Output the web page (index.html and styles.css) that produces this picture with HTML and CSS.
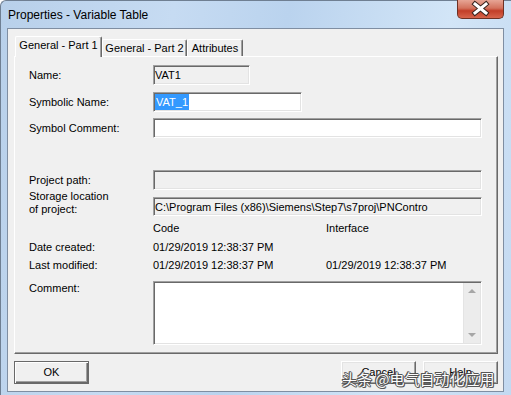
FILE: index.html
```html
<!DOCTYPE html>
<html lang="en">
<head>
  <meta charset="UTF-8">
  <meta name="viewport" content="width=device-width, initial-scale=1.0">
  <title>Properties - Variable Table</title>
  <link rel="stylesheet" href="styles.css">
</head>
<body>
  <div class="window">
    <!-- Title bar -->
    <div class="titlebar">
      <span class="title">Properties - Variable Table</span>
      <div class="close-btn">
        <svg width="47" height="19" viewBox="0 0 47 19">
          <path d="M18 5 L29 14 M29 5 L18 14" stroke="#3b2620" stroke-width="5" stroke-linecap="square"/>
          <path d="M18 5 L29 14 M29 5 L18 14" stroke="#ffffff" stroke-width="3" stroke-linecap="square"/>
        </svg>
      </div>
    </div>

    <div class="client">
      <!-- Tabs -->
      <div class="tabs">
        <div class="tab active">General - Part 1</div>
        <div class="tab tab-wide">General - Part 2</div>
        <div class="tab tab-small">Attributes</div>
      </div>

      <div class="panel">
        <div class="row">
          <label>Name:</label>
          <div class="field readonly name-field">VAT1</div>
        </div>

        <div class="row gap-7">
          <label>Symbolic Name:</label>
          <div class="field symbol-field"><span class="selected">VAT_1</span></div>
        </div>

        <div class="row gap-6">
          <label>Symbol Comment:</label>
          <div class="field wide"></div>
        </div>

        <div class="row gap-32">
          <label>Project path:</label>
          <div class="field readonly wide"></div>
        </div>

        <div class="row storage">
          <label>Storage location<br>of project:</label>
          <div class="field readonly wide">C:\Program Files (x86)\Siemens\Step7\s7proj\PNContro</div>
        </div>

        <div class="row info gap-5">
          <label></label>
          <span class="code-col">Code</span>
          <span>Interface</span>
        </div>

        <div class="row info gap-5">
          <label>Date created:</label>
          <span class="code-col">01/29/2019 12:38:37 PM</span>
          <span></span>
        </div>

        <div class="row info gap-4">
          <label>Last modified:</label>
          <span class="code-col">01/29/2019 12:38:37 PM</span>
          <span>01/29/2019 12:38:37 PM</span>
        </div>

        <div class="row comment gap-9">
          <label>Comment:</label>
          <div class="field wide memo">
            <div class="memo-text"></div>
            <div class="scrollbar">
              <div class="arrow up"></div>
              <div class="track"></div>
              <div class="arrow down"></div>
            </div>
          </div>
        </div>
      </div>

      <!-- Dialog buttons -->
      <div class="buttons">
        <button class="btn default">OK</button>
        <span class="spacer"></span>
        <button class="btn">Cancel</button>
        <button class="btn">Help</button>
      </div>

      <div class="watermark">头条 @电气自动化应用</div>
    </div>
  </div>
</body>
</html>
```

FILE: styles.css
```css
* {
    box-sizing: border-box;
}
body {
    margin: 0;
    font-family: "Liberation Sans", Arial, sans-serif;
    font-size: 11px;
    color: #000;
    background: #fff;
}
.window {
    width: 511px;
    height: 395px;
    display: flex;
    flex-direction: column;
    border-left: 1px solid #6f7f92;
    border-top: 1px solid #6f7f92;
    border-radius: 6px 0 0 0;
    background: linear-gradient(100deg, #b8d0ea 0%, #c6dbf2 30%, #bad3ee 50%, #d2e5f7 78%, #c3d9f1 100%);
}
.titlebar {
    height: 27px;
    display: flex;
    align-items: center;
    padding-left: 7px;
}
.title {
    font-size: 12px;
    color: #000;
}
.close-btn {
    margin-left: auto;
    margin-right: 7px;
    align-self: flex-start;
    margin-top: -1px;
    width: 47px;
    height: 19px;
    border: 1px solid #6e3124;
    border-top: none;
    border-radius: 0 0 5px 5px;
    background: linear-gradient(#e7a595, #d3725d 45%, #c23e28 60%, #d7654c);
    overflow: hidden;
}
.close-btn svg {
    display: block;
    margin: -1px 0 0 -1px;
}

.client {
    position: relative;
    margin-left: 6px;
    width: 497px;
    height: 364px;
    border: 1px solid #7f8ea2;
    background: #f0f0f0;
    padding: 7px 0 0 6px;
}

/* tabs */
.tabs {
    display: flex;
    align-items: flex-end;
    height: 20px;
    margin-left: 1px;
}
.tab {
    width: 85px;
    height: 17px;
    line-height: 17px;
    text-align: center;
    border: 1px solid #fff;
    border-bottom: none;
    border-right-color: #696969;
    border-radius: 2px 2px 0 0;
    box-shadow: inset -1px 0 #a0a0a0;
}
.tab.active {
    width: 87px;
    height: 21px;
    line-height: 16px;
    margin-bottom: -1px;
    position: relative;
    z-index: 1;
    background: #f0f0f0;
}
.tab-small {
    width: 56px;
}

.panel {
    width: 484px;
    height: 298px;
    border: 1px solid #fff;
    border-right-color: #696969;
    border-bottom-color: #696969;
    box-shadow: inset -1px -1px #a0a0a0;
    padding: 8px 0 0 14px;
}
.row {
    display: flex;
    align-items: center;
}
.row label {
    width: 124px;
    flex: none;
}
.gap-4 { margin-top: 4px; }
.gap-5 { margin-top: 5px; }
.gap-6 { margin-top: 6px; }
.gap-7 { margin-top: 7px; }
.gap-9 { margin-top: 9px; }
.gap-32 { margin-top: 32px; }

.field {
    height: 20px;
    line-height: 16px;
    padding: 1px 0 0 1px;
    background: #fff;
    border: 1px solid;
    border-color: #a0a0a0 #fff #fff #a0a0a0;
    box-shadow: inset 1px 1px #696969, inset -1px -1px #e3e3e3;
    white-space: nowrap;
    overflow: hidden;
}
.field.readonly {
    background: #f0f0f0;
}
.name-field {
    width: 97px;
}
.symbol-field {
    width: 149px;
}
.wide {
    width: 329px;
}
.selected {
    background: #3399ff;
    color: #fff;
    padding: 0 1px;
    display: inline-block;
    line-height: 16px;
}

.storage {
    align-items: flex-end;
}
.storage label {
    line-height: 13px;
}
.storage .field {
    height: 19px;
}

.info {
    line-height: 14px;
}
.code-col {
    width: 173px;
}

.comment {
    align-items: flex-start;
}
.comment label {
    line-height: 14px;
}
.memo {
    height: 64px;
    display: flex;
    padding: 1px;
}
.memo-text {
    flex: 1;
}
.scrollbar {
    width: 17px;
    display: flex;
    flex-direction: column;
    background: #ececec;
    border-left: 1px solid #e4e4e4;
}
.track {
    flex: 1;
}
.arrow {
    height: 17px;
    position: relative;
}
.arrow::after {
    content: "";
    position: absolute;
    left: 4px;
    border-left: 4px solid transparent;
    border-right: 4px solid transparent;
}
.arrow.up::after {
    top: 6px;
    border-bottom: 4px solid #a6a6a6;
}
.arrow.down::after {
    top: 7px;
    border-top: 4px solid #a6a6a6;
}

/* buttons */
.buttons {
    display: flex;
    gap: 7px;
    width: 484px;
    margin-top: 7px;
}
.spacer {
    flex: 1;
}
.btn {
    width: 75px;
    height: 23px;
    font-family: "Liberation Sans", Arial, sans-serif;
    font-size: 11px;
    color: #000;
    background: #f0f0f0;
    border: 1px solid;
    border-color: #fff #696969 #696969 #fff;
    box-shadow: inset -1px -1px #a0a0a0, inset 1px 1px #e3e3e3;
    padding: 0 0 2px 0;
}
.btn.default {
    border-color: #696969;
    box-shadow: inset 1px 1px #fff, inset -1px -1px #696969, inset -2px -2px #a0a0a0;
}

.watermark {
    position: absolute;
    left: 334px;
    top: 340px;
    font-family: "Noto Sans CJK SC", sans-serif;
    font-size: 15px;
    line-height: 20px;
    color: #fff;
    opacity: 0.92;
    text-shadow: 1px 0 0 #4a4a4a, -1px 0 0 #4a4a4a, 0 1px 0 #4a4a4a, 0 -1px 0 #4a4a4a, 1px 1px 0 #4a4a4a, -1px -1px 0 #4a4a4a;
    white-space: nowrap;
}
```
